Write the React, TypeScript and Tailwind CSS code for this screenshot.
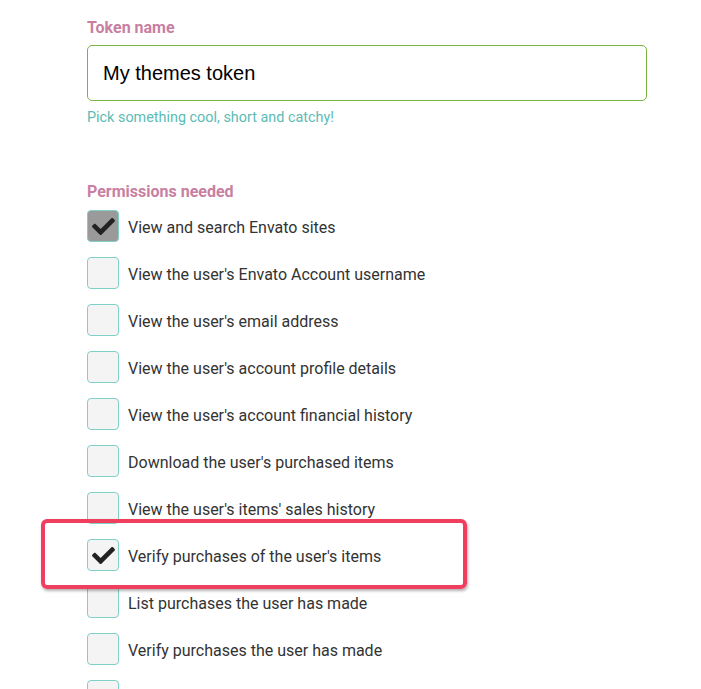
import React from "react";

const permissions = [
  { label: "View and search Envato sites", checked: true, disabled: true },
  { label: "View the user's Envato Account username" },
  { label: "View the user's email address" },
  { label: "View the user's account profile details" },
  { label: "View the user's account financial history" },
  { label: "Download the user's purchased items" },
  { label: "View the user's items' sales history" },
  { label: "Verify purchases of the user's items", checked: true },
  { label: "List purchases the user has made" },
  { label: "Verify purchases the user has made" },
  { label: "View the user's purchases of the app creator's items" },
];

function Check() {
  return (
    <svg viewBox="0 0 512 512" className="w-[23px] h-[23px]" fill="#222">
      <path d="M173.9 439.4L7.5 273c-10-10-10-26.2 0-36.2l36.2-36.2c10-10 26.2-10 36.2 0L192 312.7 432.1 72.6c10-10 26.2-10 36.2 0l36.2 36.2c10 10 10 26.2 0 36.2L210.1 439.4c-10 10-26.2 10-36.2 0z" />
    </svg>
  );
}

function Row({ label, checked, disabled }: { label: string; checked?: boolean; disabled?: boolean }) {
  return (
    <label className="flex items-center gap-[9px] h-[32px] mb-[15px]">
      <span
        className={
          "flex items-center justify-center w-[32px] h-[32px] shrink-0 rounded-[4px] border border-[#7fd0c7] " +
          (disabled ? "bg-[#9a9a9a]" : "bg-[#f4f4f4]")
        }
      >
        {checked && <Check />}
      </span>
      <span className="mt-[3px] text-[16px] text-[#333] leading-none">{label}</span>
    </label>
  );
}

export default function App() {
  return (
    <div className="relative w-[701px] h-[689px] overflow-hidden bg-white font-['Roboto',sans-serif]">
      <div className="pl-[87px] pr-[55px] pt-[18px]">
        <div className="text-[16px] font-bold text-[#c87fa2] leading-[20px]">Token name</div>
        <div className="mt-[7px] h-[56px] w-[560px] rounded-[5px] border border-[#7cb342] flex items-center pl-[15px]">
          <span className="font-['Liberation_Sans',sans-serif] text-[20px] text-black">My themes token</span>
        </div>
        <div className="mt-[8px] text-[14.4px] text-[#5cbcb4] leading-[18px]">Pick something cool, short and catchy!</div>

        <div className="mt-[55px] text-[16px] font-bold text-[#c87fa2] leading-[20px]">Permissions needed</div>
        <div className="mt-[8px]">
          {permissions.map((p) => (
            <Row key={p.label} {...p} />
          ))}
        </div>
      </div>

      <div className="absolute left-[41px] top-[519px] w-[426px] h-[70px] rounded-[6px] border-[4px] border-[#f03e5f] shadow-[1px_2px_3px_rgba(0,0,0,0.3)]" />
    </div>
  );
}
